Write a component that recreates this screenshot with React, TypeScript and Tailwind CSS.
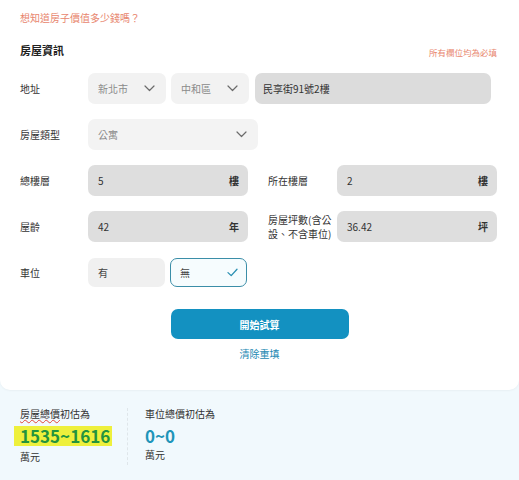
import React from "react";

const font = { fontFamily: '"Noto Sans CJK TC", "Noto Sans", sans-serif' };

function Chevron({ className = "" }: { className?: string }) {
  return (
    <svg width="11" height="7" viewBox="0 0 11 7" className={className} fill="none">
      <path d="M1 1l4.5 4.5L10 1" stroke="#6b6b6b" strokeWidth="1.2" strokeLinecap="round" strokeLinejoin="round" />
    </svg>
  );
}

function Label({ children, w = "w-[68px]" }: { children: React.ReactNode; w?: string }) {
  return <div className={`${w} shrink-0 text-[10px] leading-[14px] text-[#333]`}>{children}</div>;
}

function NumBox({ value, unit }: { value: string; unit: string }) {
  return (
    <div className="w-[160px] h-[31px] rounded-[7px] bg-[#dedede] flex items-center justify-between pl-[10px] pr-[9px]">
      <span className="text-[10px] text-[#333]">{value}</span>
      <span className="text-[10px] font-bold text-[#333]">{unit}</span>
    </div>
  );
}

export default function App() {
  return (
    <div className="w-[519px] h-[480px] overflow-hidden bg-[#f1f9fd]" style={font}>
      <div className="bg-white px-[20px] pt-[11px] pb-[29px] rounded-b-[10px] shadow-[0_1px_2px_rgba(0,0,0,0.04)]">
        <p className="text-[10px] leading-[14px] text-[#e8866e]">想知道房子價值多少錢嗎？</p>
        <div className="mt-[18px] h-[14px] flex items-center justify-between pr-[2px]">
          <span className="text-[11px] leading-[14px] font-bold text-[#222]">房屋資訊</span>
          <span className="text-[8.5px] leading-[12px] text-[#e8866e] mt-[3px]">所有欄位均為必填</span>
        </div>

        <div className="mt-[16px] flex flex-col gap-[15px]">
          <div className="flex items-center h-[31px]">
            <Label>地址</Label>
            <div className="w-[78px] h-[31px] rounded-[7px] bg-[#f2f2f2] flex items-center justify-between pl-[10px] pr-[11px]">
              <span className="text-[10px] text-[#8a8a8a]">新北市</span>
              <Chevron />
            </div>
            <div className="ml-[5px] w-[78px] h-[31px] rounded-[7px] bg-[#f2f2f2] flex items-center justify-between pl-[10px] pr-[11px]">
              <span className="text-[10px] text-[#8a8a8a]">中和區</span>
              <Chevron />
            </div>
            <div className="ml-[6px] w-[236px] h-[31px] rounded-[7px] bg-[#dcdcdc] flex items-center pl-[8px]">
              <span className="text-[10px] text-[#333]">民享街91號2樓</span>
            </div>
          </div>

          <div className="flex items-center h-[31px]">
            <Label>房屋類型</Label>
            <div className="w-[170px] h-[31px] rounded-[7px] bg-[#f3f3f3] flex items-center justify-between pl-[10px] pr-[11px]">
              <span className="text-[10px] text-[#8a8a8a]">公寓</span>
              <Chevron />
            </div>
          </div>

          <div className="flex items-center h-[31px]">
            <Label>總樓層</Label>
            <NumBox value="5" unit="樓" />
            <div className="ml-[20px]">
              <Label w="w-[69px]">所在樓層</Label>
            </div>
            <NumBox value="2" unit="樓" />
          </div>

          <div className="flex items-center h-[31px]">
            <Label>屋齡</Label>
            <NumBox value="42" unit="年" />
            <div className="ml-[20px]">
              <Label w="w-[69px]">
                房屋坪數(含公
                <br />
                設、不含車位)
              </Label>
            </div>
            <NumBox value="36.42" unit="坪" />
          </div>

          <div className="flex items-center h-[31px]">
            <Label>車位</Label>
            <div className="w-[77px] h-[29px] rounded-[7px] bg-[#f0f0f0] flex items-center pl-[10px]">
              <span className="text-[10px] text-[#444]">有</span>
            </div>
            <div className="ml-[5px] w-[77px] h-[29px] rounded-[7px] border border-[#3b8ea8] bg-[#f6fcfe] flex items-center justify-between pl-[9px] pr-[8px]">
              <span className="text-[10px] text-[#444]">無</span>
              <svg width="11" height="9" viewBox="0 0 11 9" fill="none">
                <path d="M1 4.6l3.2 3L10 1.2" stroke="#2a8fb2" strokeWidth="1.3" strokeLinecap="round" strokeLinejoin="round" />
              </svg>
            </div>
          </div>
        </div>

        <button className="mt-[21px] mx-auto block w-[178px] h-[30px] rounded-[7px] bg-[#1391c1] text-white text-[10px] font-bold">
          開始試算
        </button>
        <div className="mt-[8px] text-center text-[10px] leading-[14px] text-[#2389b3]">清除重填</div>
      </div>

      <div className="px-[20px] pt-[17px] flex">
        <div className="w-[107px]">
          <div className="text-[10px] leading-[14px] text-[#333]">
            <span className="underline decoration-wavy decoration-[#e0443a] underline-offset-[1px]">房屋總價</span>初估為
          </div>
          <div className="mt-[5px] -ml-[6px] inline-block bg-[#eef03c] px-[6px] pr-[2px] h-[20px] leading-[20px] text-[17px] font-bold text-[#23933f]">
            1535~1616
          </div>
          <div className="mt-[2px] text-[10px] leading-[14px] text-[#333]">萬元</div>
        </div>
        <div className="mt-[1px] h-[57px] border-l border-dashed border-[#dfe6ea]" />
        <div className="pl-[17px]">
          <div className="text-[10px] leading-[14px] text-[#333]">車位總價初估為</div>
          <div className="mt-[5px] h-[20px] leading-[20px] text-[17px] font-bold text-[#1f95b9]">0~0</div>
          <div className="mt-[2px] text-[10px] leading-[14px] text-[#333]">萬元</div>
        </div>
      </div>
    </div>
  );
}
